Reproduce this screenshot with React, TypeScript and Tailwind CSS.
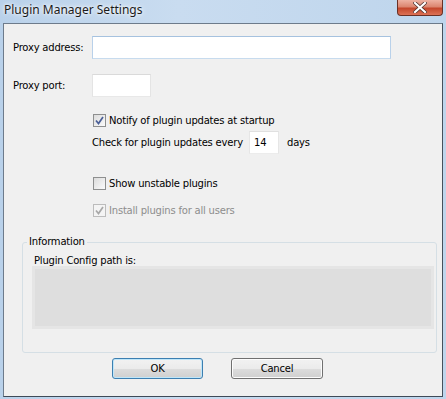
import React from 'react'

const ui = { fontFamily: '"DejaVu Sans", Tahoma, sans-serif' }

const CheckBox = ({ checked, disabled }: { checked?: boolean; disabled?: boolean }) => (
  <div
    className={`flex size-[13px] shrink-0 items-center justify-center border ${
      disabled ? 'border-[#bcbcbc] bg-[#f4f4f4]' : 'border-[#8e8f8f] bg-gradient-to-br from-[#dcdcdc] to-[#fbfbfb]'
    }`}
  >
    {checked && (
      <svg width="9" height="9" viewBox="0 0 9 9">
        <path
          d="M1 4.5 L3.5 7.5 L8 1"
          fill="none"
          stroke={disabled ? '#a8a8a8' : '#4a5f97'}
          strokeWidth="1.7"
        />
      </svg>
    )}
  </div>
)

const TextBox = ({ className, value }: { className: string; value?: string }) => (
  <div className={`flex items-center border bg-white px-[4px] ${className}`}>{value}</div>
)

const Button = ({ label, primary }: { label: string; primary?: boolean }) => (
  <div
    className={`flex h-[21px] items-center justify-center rounded-[3px] border ${
      primary ? 'w-[91px] border-[#3c7fb1] shadow-[inset_0_0_0_1px_#bfe6f9]' : 'w-[92px] border-[#707070] shadow-[inset_0_0_0_1px_#fcfcfc]'
    } bg-[linear-gradient(#f2f2f2_0%,#ebebeb_50%,#dddddd_50%,#cfcfcf_100%)] text-black`}
  >
    {label}
  </div>
)

export default function App() {
  return (
    <div className="flex h-[399px] w-[446px] flex-col bg-[linear-gradient(90deg,#b9d1ea_0%,#c9dcf0_40%,#bed5ec_100%)]">
      <div className="flex h-[23px] shrink-0 items-start justify-between pl-[4px] pr-[3px]">
        <span
          className="mt-[1px] text-[12px] text-[#1b1b1b] [text-shadow:0_0_6px_#ffffff,0_0_3px_#ffffff]"
          style={{ fontFamily: '"Noto Sans", "Segoe UI", sans-serif' }}
        >
          Plugin Manager Settings
        </span>
        <div className="flex h-[16px] w-[46px] items-center justify-center rounded-b-[4px] border border-t-0 border-[#6a3025] bg-[linear-gradient(#eeb2a2_0%,#dc8670_45%,#c4472c_55%,#dc7256_100%)]">
          <svg width="14" height="11" viewBox="0 0 14 11">
            <path d="M2 1 L12 10 M12 1 L2 10" stroke="#4a2e2a" strokeWidth="3.6" strokeLinecap="square" />
            <path d="M2 1 L12 10 M12 1 L2 10" stroke="#ffffff" strokeWidth="2.2" strokeLinecap="square" />
          </svg>
        </div>
      </div>
      <div
        className="mx-[3px] mb-[2px] flex flex-1 flex-col border border-[#6d7b8b] border-b-[#3f4a57] border-r-[#45505c] bg-[#f0f0f0] text-[10px] tracking-[-0.2px] text-black"
        style={ui}
      >
        <div className="mt-[12px] flex items-center pl-[9px]">
          <span className="w-[79px]">Proxy address:</span>
          <TextBox className="h-[23px] w-[299px] border-[#a6c2df] border-x-[#b9d1ea] border-b-[#c7dbee]" />
        </div>
        <div className="mt-[15px] flex items-center pl-[9px]">
          <span className="w-[79px]">Proxy port:</span>
          <TextBox className="h-[23px] w-[59px] border-[#dadada] border-x-[#e4e4e4] border-b-[#e8e8e8]" />
        </div>
        <div className="flex flex-col pl-[88px]">
          <div className="mt-[17px] flex h-[13px] items-center gap-[3px] pl-[1px]">
            <CheckBox checked />
            <span>Notify of plugin updates at startup</span>
          </div>
          <div className="mt-[4px] flex items-center">
            <span className="w-[157px]">Check for plugin updates every</span>
            <TextBox className="h-[23px] w-[30px] border-[#e0e0e0] border-x-[#e6e6e6] border-b-[#ececec]" value="14" />
            <span className="ml-[8px]">days</span>
          </div>
          <div className="mt-[23px] flex h-[13px] items-center gap-[3px] pl-[1px]">
            <CheckBox />
            <span>Show unstable plugins</span>
          </div>
          <div className="mt-[14px] flex h-[13px] items-center gap-[3px] pl-[1px] text-[#8d8d8d]">
            <CheckBox checked disabled />
            <span>Install plugins for all users</span>
          </div>
        </div>
        <fieldset className="ml-[18px] mr-[5px] mt-[18px] h-[118px] rounded-[3px] border border-[#d5dfe5] pb-0">
          <legend className="ml-[4px] px-[2px] leading-[14px]">Information</legend>
          <div className="ml-[11px] mt-[6px] leading-[12px]">Plugin Config path is:</div>
          <div className="ml-[9px] mr-[2px] mt-[-1px] h-[63px] border-[3px] border-[#e5e5e5] bg-[#dedede]" />
        </fieldset>
        <div className="mt-[5px] flex pl-[108px]">
          <Button label="OK" primary />
          <div className="w-[28px]" />
          <Button label="Cancel" />
        </div>
      </div>
    </div>
  )
}
